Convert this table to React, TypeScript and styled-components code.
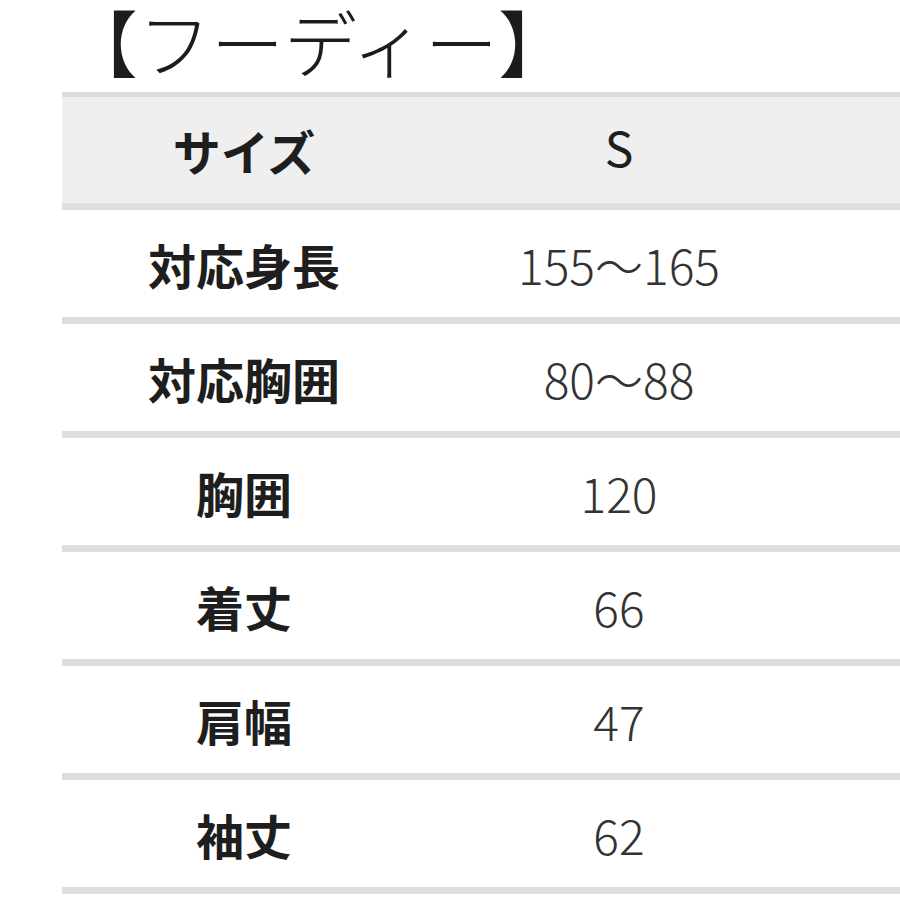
import React from "react";
import styled, { createGlobalStyle } from "styled-components";

const GlobalStyle = createGlobalStyle`
  html, body {
    margin: 0;
    padding: 0;
    background: #ffffff;
    overflow: hidden;
  }
  body {
    font-family: "Noto Sans CJK JP", "Noto Sans", sans-serif;
  }
`;

interface RowData {
  label: string;
  value: string;
}

const rows: RowData[] = [
  { label: "対応身長", value: "155〜165" },
  { label: "対応胸囲", value: "80〜88" },
  { label: "胸囲", value: "120" },
  { label: "着丈", value: "66" },
  { label: "肩幅", value: "47" },
  { label: "袖丈", value: "62" },
];

const App: React.FC = () => {
  return (
    <>
      <GlobalStyle />
      <Page>
        <Title>【フーディー】</Title>
        <Table>
          <HeaderRow>
            <Label>サイズ</Label>
            <HeaderValue>S</HeaderValue>
            <Cell />
          </HeaderRow>
          {rows.map((row) => (
            <Row key={row.label}>
              <Label>{row.label}</Label>
              <Value>{row.value}</Value>
              <Cell />
            </Row>
          ))}
        </Table>
      </Page>
    </>
  );
};

const Page = styled.div`
  width: 900px;
  height: 900px;
  display: flex;
  flex-direction: column;
  overflow: hidden;
`;

const Title = styled.h1`
  margin: 0 0 0 65px;
  height: 92px;
  font-size: 73px;
  font-weight: 300;
  line-height: 80px;
  color: #1c1c1c;
  letter-spacing: 0;
  white-space: nowrap;
`;

const Table = styled.div`
  margin-left: 62px;
  width: 838px;
  display: flex;
  flex-direction: column;
`;

const Row = styled.div`
  display: grid;
  grid-template-columns: 364px 386px 1fr;
  align-items: center;
  height: 107px;
  border-bottom: 7px solid #dedede;
`;

const HeaderRow = styled(Row)`
  height: 106px;
  background: #efefef;
  border-top: 5px solid #dcdcdc;
`;

const Cell = styled.div``;

const Label = styled.div`
  text-align: center;
  font-size: 48px;
  font-weight: 700;
  color: #1e1e1e;
  line-height: 1;
`;

const Value = styled.div`
  text-align: center;
  font-size: 48px;
  font-weight: 300;
  color: #333333;
  line-height: 1;
`;

const HeaderValue = styled(Value)`
  font-weight: 400;
  color: #1e1e1e;
  transform: translateY(-4px);
`;

export default App;
